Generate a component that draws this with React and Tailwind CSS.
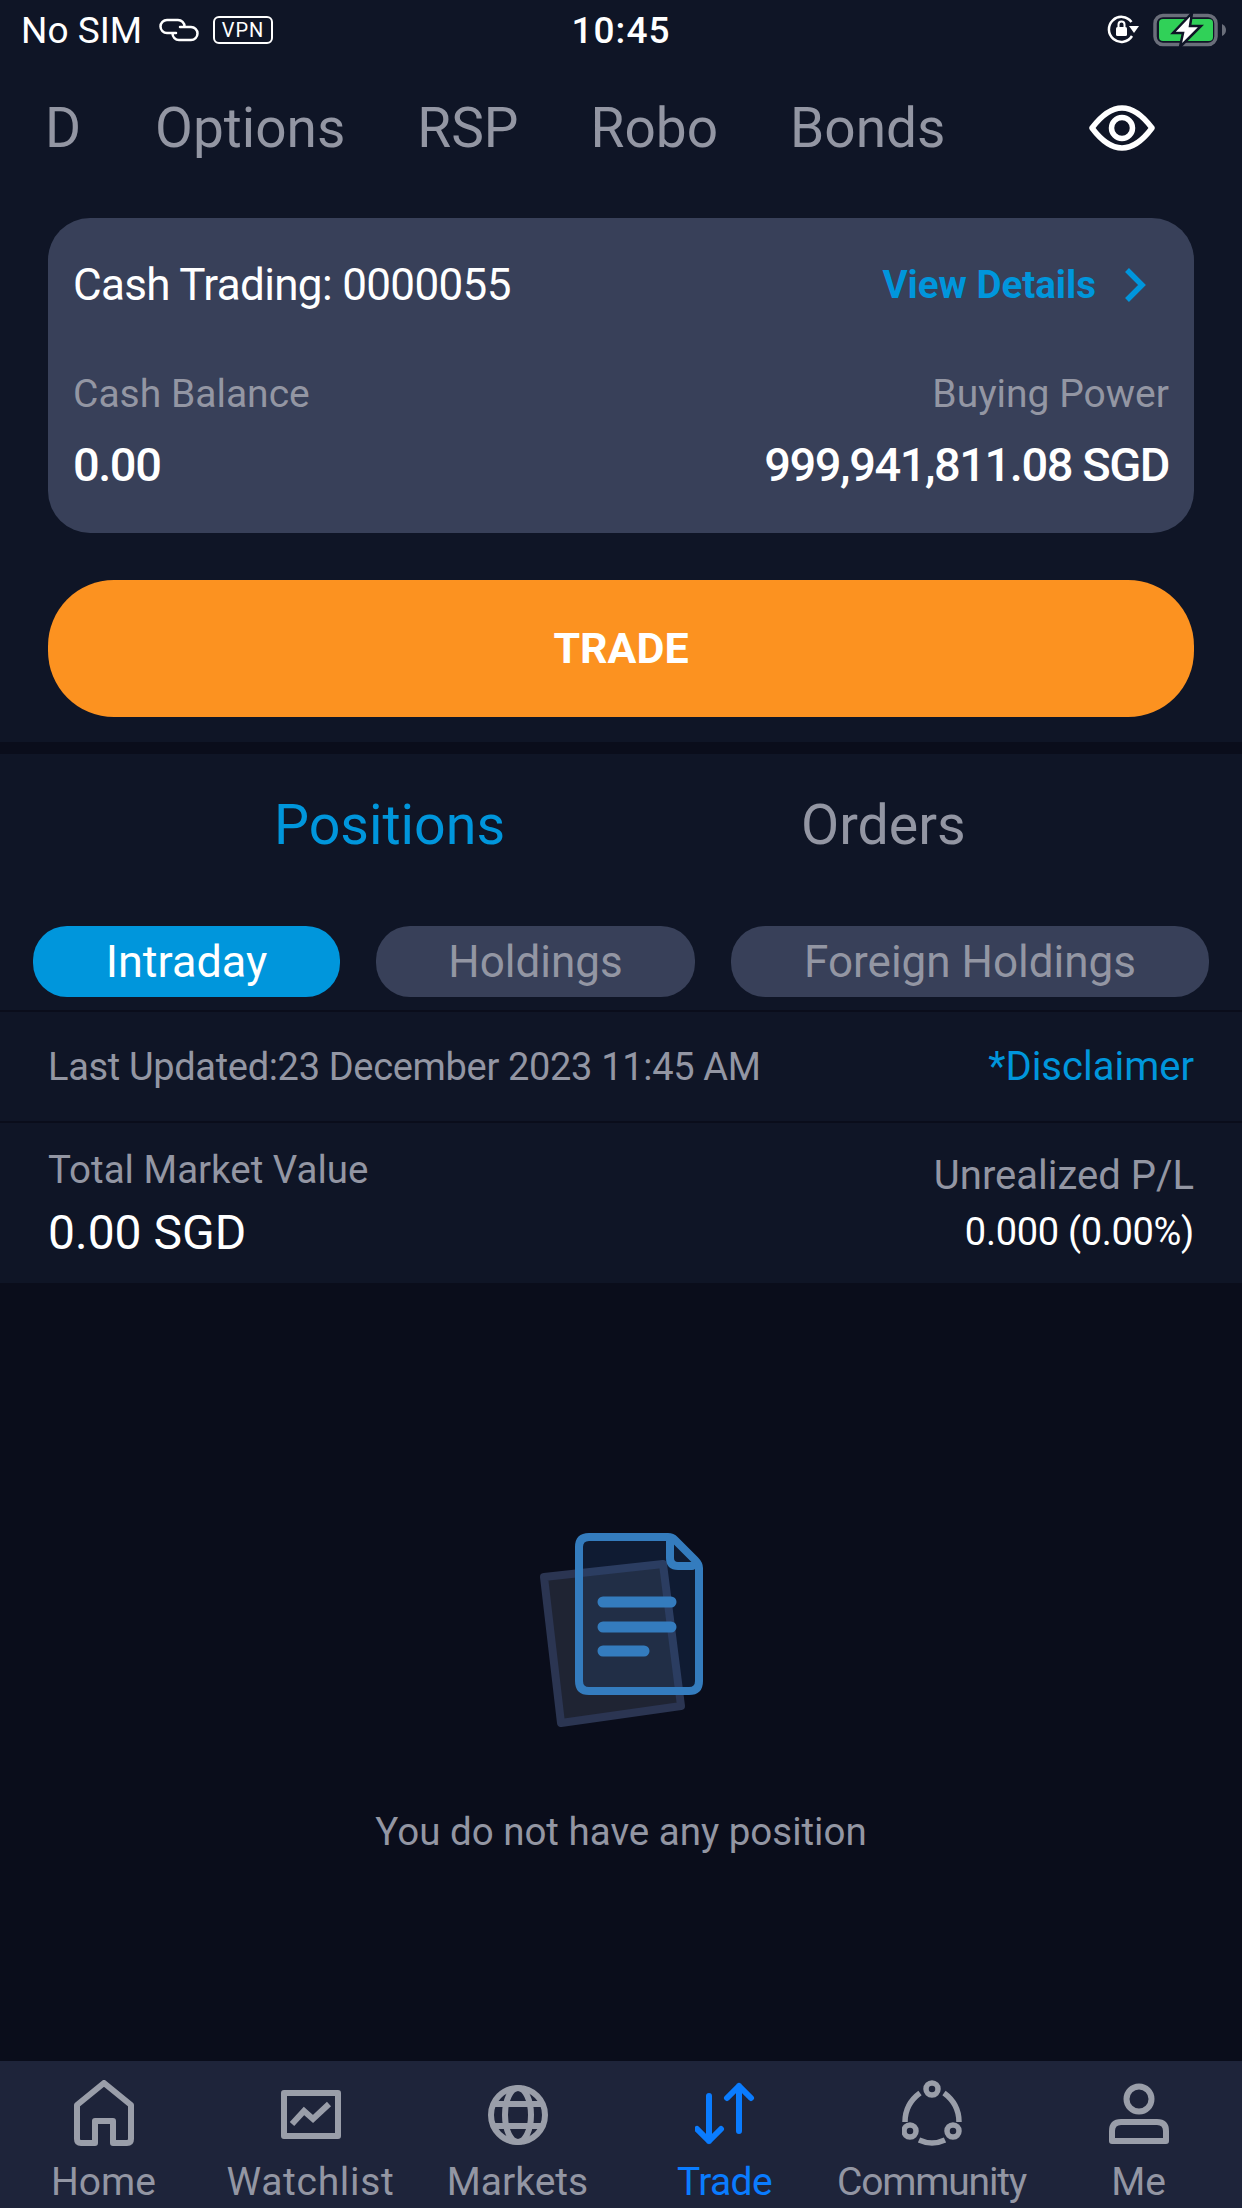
const navItems = [
  { label: "Home", icon: HomeIcon, tracking: "" },
  { label: "Watchlist", icon: WatchlistIcon, tracking: "tracking-[0.7px]" },
  { label: "Markets", icon: GlobeIcon, tracking: "" },
  { label: "Trade", icon: TradeIcon, tracking: "tracking-[-0.6px]", active: true },
  { label: "Community", icon: CommunityIcon, tracking: "tracking-[-1.2px]" },
  { label: "Me", icon: MeIcon, tracking: "" },
];

function HomeIcon() {
  return (
    <svg width="60" height="66" viewBox="0 0 60 66" fill="none" stroke="currentColor" strokeWidth="6" strokeLinejoin="round">
      <path d="M21 63H7Q3 63 3 59V25L30 3L57 25V59Q57 63 53 63H39V41H21Z" />
    </svg>
  );
}

function WatchlistIcon() {
  return (
    <svg width="60" height="66" viewBox="0 0 60 66" fill="none" stroke="currentColor" strokeWidth="6">
      <rect x="3" y="13" width="54" height="43" strokeLinejoin="round" />
      <path d="M11 44L23 31L32 39L48 24" />
    </svg>
  );
}

function GlobeIcon() {
  return (
    <svg width="60" height="66" viewBox="0 0 60 66" fill="none" stroke="currentColor" strokeWidth="6">
      <circle cx="30" cy="35" r="27" />
      <ellipse cx="30" cy="35" rx="13" ry="27" />
      <path d="M6 24H54M6 46H54" />
    </svg>
  );
}

function TradeIcon() {
  return (
    <svg width="60" height="66" viewBox="0 0 60 66" fill="none" stroke="currentColor" strokeWidth="6" strokeLinecap="round" strokeLinejoin="round">
      <path d="M44 6V51M32 18L44 6L56 18" />
      <path d="M14 16V61M2 49L14 61L26 49" />
    </svg>
  );
}

function CommunityIcon() {
  return (
    <svg width="60" height="66" viewBox="0 0 60 66" fill="none" stroke="currentColor" strokeWidth="5.5">
      <circle cx="30" cy="9" r="6" />
      <circle cx="8" cy="51" r="6" />
      <circle cx="51" cy="51" r="6" />
      <path d="M18 13Q3 24 3 42M42 13Q57 24 57 42M17 60Q30 66 43 60" />
    </svg>
  );
}

function MeIcon() {
  return (
    <svg width="60" height="66" viewBox="0 0 60 66" fill="none" stroke="currentColor" strokeWidth="6">
      <circle cx="30" cy="19" r="12.5" />
      <path d="M3 61V51Q3 42 12 42H48Q57 42 57 51V61Z" strokeLinejoin="round" />
    </svg>
  );
}

function LinkIcon() {
  return (
    <svg width="40" height="24" viewBox="0 0 40 24" fill="none" stroke="white" strokeWidth="2.5" strokeLinecap="round">
      <path d="M17 15H8A6.5 6.5 0 0 1 8 2H19A6.5 6.5 0 0 1 25.5 8.5" />
      <path d="M21 9H32A6.5 6.5 0 0 1 32 22H20A6.5 6.5 0 0 1 13.5 15.5" />
    </svg>
  );
}

function EyeIcon() {
  return (
    <svg width="66" height="46" viewBox="0 0 66 46" fill="none" stroke="white" strokeWidth="5.5">
      <path d="M3 23Q18 3 33 3Q48 3 63 23Q48 43 33 43Q18 43 3 23Z" strokeLinejoin="round" />
      <circle cx="33" cy="23" r="10.5" />
    </svg>
  );
}

function Chevron() {
  return (
    <svg width="22" height="36" viewBox="0 0 22 36" fill="none" stroke="currentColor" strokeWidth="5.5">
      <path d="M3 3L18 18L3 33" />
    </svg>
  );
}

function LockRotationIcon() {
  return (
    <svg width="34" height="34" viewBox="0 0 34 34" fill="none">
      <path d="M27 23A12.5 12.5 0 1 1 26.5 9" stroke="white" strokeWidth="2.5" />
      <path d="M24 13H34L29 20Z" fill="white" />
      <rect x="11" y="14" width="11" height="9" rx="1.5" fill="white" />
      <path d="M13.5 14V11.5A3 3 0 0 1 19.5 11.5V14" stroke="white" strokeWidth="2" />
    </svg>
  );
}

function BatteryIcon() {
  return (
    <svg width="75" height="36" viewBox="0 0 75 36" fill="none">
      <rect x="2" y="3.5" width="61" height="29" rx="8" stroke="#6a6e7a" strokeWidth="3.5" />
      <rect x="6" y="7" width="54" height="22" rx="4" fill="#30d158" />
      <path d="M69 12Q73 14 73 18Q73 22 69 24Z" fill="#6a6e7a" />
      <path d="M39 1L20 21H30L27 35L48 14H37Z" fill="white" stroke="#0f1526" strokeWidth="2.5" />
    </svg>
  );
}

function EmptyDocIcon() {
  return (
    <svg width="240" height="240" viewBox="0 0 240 240" fill="none">
      <path d="M44 77L163 64L181 206L61 223Z" fill="#1f2433" stroke="#2b3552" strokeWidth="8" strokeLinejoin="round" />
      <path
        d="M89 37H168Q172 37 175 40L195 60Q199 64 199 68V181Q199 191 189 191H89Q79 191 79 181V47Q79 37 89 37Z"
        fill="#2f6fc0"
        fillOpacity="0.14"
        stroke="#347cbe"
        strokeWidth="8"
      />
      <path d="M170 38V58Q170 66 178 66H192" stroke="#347cbe" strokeWidth="8" strokeLinecap="round" />
      <path d="M103 102H171M103 127H171M103 151H144" stroke="#347cbe" strokeWidth="11" strokeLinecap="round" />
    </svg>
  );
}

export default function App() {
  return (
    <div className="flex h-[2208px] w-[1242px] flex-col overflow-hidden bg-[#0a0d1b] font-['Roboto',sans-serif] text-white">
      <div className="bg-[#0f1526]">
        {/* status bar */}
        <div className="relative flex h-[60px] items-center pl-[21px] pr-[14px] text-[37px] leading-none">
          <span>No SIM</span>
          <span className="ml-[17px]"><LinkIcon /></span>
          <span className="ml-[14px] flex h-[28px] w-[60px] items-center justify-center rounded-[6px] border-2 border-white text-[20px] leading-none tracking-[1px]">VPN</span>
          <span className="absolute left-0 right-0 text-center font-medium tracking-[1px]">10:45</span>
          <span className="ml-auto flex items-center gap-[14px]">
            <LockRotationIcon />
            <BatteryIcon />
          </span>
        </div>

        {/* product tabs */}
        <div className="flex h-[136px] items-center pl-[45px] pr-[87px] text-[55px] leading-none text-[#9396a3]">
          <span>D</span>
          <span className="ml-[74px]">Options</span>
          <span className="ml-[72px]">RSP</span>
          <span className="ml-[72px]">Robo</span>
          <span className="ml-[72px]">Bonds</span>
          <span className="ml-auto"><EyeIcon /></span>
        </div>

        {/* account card */}
        <div className="mx-[48px] mt-[22px] h-[315px] rounded-[42px] bg-[#384059] px-[25px] pt-[40px]">
          <div className="flex h-[54px] items-center justify-between">
            <span className="text-[44px] leading-none tracking-[-0.65px]">Cash Trading: 0000055</span>
            <span className="flex items-center gap-[28px] pr-[23px] text-[#0096dc]">
              <span className="text-[38.5px] font-bold leading-none">View Details</span>
              <Chevron />
            </span>
          </div>
          <div className="mt-[63px] flex justify-between text-[39px] leading-none text-[#9396a3]">
            <span>Cash Balance</span>
            <span>Buying Power</span>
          </div>
          <div className="mt-[27px] flex justify-between text-[47px] font-medium leading-none tracking-[-1.45px]">
            <span>0.00</span>
            <span>999,941,811.08 SGD</span>
          </div>
        </div>

        <button type="button" className="mx-[48px] mt-[47px] block h-[137px] w-[1146px] rounded-[66px] bg-[#fc9220] text-[43px] font-bold">
          TRADE
        </button>
        <div className="h-[25px]" />
      </div>

      <div className="h-[12px] bg-[#0a0d1b]" />

      <div className="bg-[#0f1526]">
        {/* positions / orders */}
        <div className="flex h-[172px] items-center pb-[28px] text-[55.5px] leading-none">
          <span className="ml-[274px] text-[#0096dc]">Positions</span>
          <span className="ml-[296px] text-[#9396a3]">Orders</span>
        </div>

        <div className="flex h-[71px] gap-[36px] pl-[33px] text-[44px] text-[#9396a3]">
          <span className="flex w-[307px] items-center justify-center rounded-[34px] bg-[#0096dc] text-[45px] text-white">Intraday</span>
          <span className="flex w-[319px] items-center justify-center rounded-[34px] bg-[#384059]">Holdings</span>
          <span className="flex w-[478px] items-center justify-center rounded-[34px] bg-[#384059]">Foreign Holdings</span>
        </div>

        <div className="mt-[13px] h-[2px] bg-[#0a0d1b]" />
        <div className="flex h-[109px] items-center justify-between px-[48px] leading-none">
          <span className="text-[38px] tracking-[-0.33px] text-[#9396a3]">Last Updated:23 December 2023 11:45 AM</span>
          <span className="text-[40px] text-[#0096dc]">*Disclaimer</span>
        </div>
        <div className="h-[2px] bg-[#0a0d1b]" />

        <div className="flex h-[160px] justify-between px-[48px] pt-[28px]">
          <div>
            <p className="text-[38.5px] leading-none text-[#9396a3]">Total Market Value</p>
            <p className="mt-[19px] text-[48px] leading-none">0.00 SGD</p>
          </div>
          <div className="pt-[5px] text-right">
            <p className="text-[40px] leading-none text-[#9396a3]">Unrealized P/L</p>
            <p className="mt-[17px] text-[38px] leading-none tracking-[-0.3px]">0.000 (0.00%)</p>
          </div>
        </div>
      </div>

      {/* empty state */}
      <div className="flex flex-1 flex-col items-center pt-[217px]">
        <span className="-ml-[2px]"><EmptyDocIcon /></span>
        <p className="mt-[73px] text-[38.5px] leading-none text-[#9396a3]">You do not have any position</p>
      </div>

      {/* bottom nav */}
      <nav className="grid h-[147px] grid-cols-6 bg-[#1e243a] pt-[19px]">
        {navItems.map((item) => {
          const Icon = item.icon;
          return (
            <div key={item.label} className={`flex flex-col items-center ${item.active ? "text-[#0a7cff]" : "text-[#9a9ea9]"}`}>
              <Icon />
              <span className={`mt-[17px] text-[39px] leading-none ${item.tracking} ${item.active ? "" : "text-[#9396a3]"}`}>{item.label}</span>
            </div>
          );
        })}
      </nav>
    </div>
  );
}
